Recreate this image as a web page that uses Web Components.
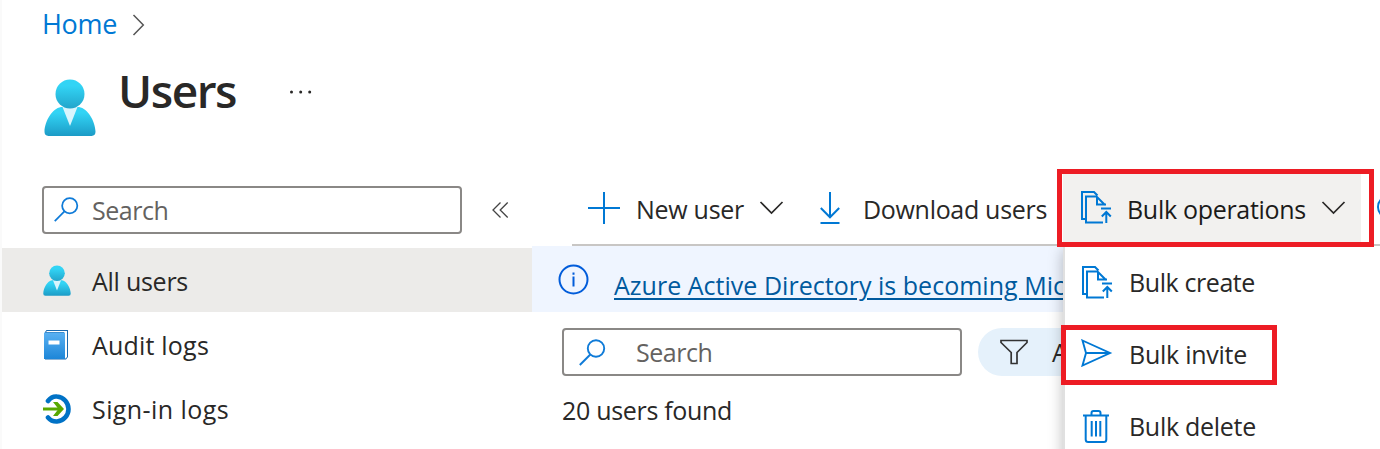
<!DOCTYPE html>
<html lang="en"><head><meta charset="utf-8"><title>Users</title>
<style>html,body{margin:0;height:449px;overflow:hidden;background:#fff}body{font-family:"Open Sans","Noto Sans",sans-serif;color:#292827}</style>
</head><body><users-page></users-page>
<script>
class Base extends HTMLElement{
  constructor(){super();this.attachShadow({mode:'open'});}
  render(css,html){this.shadowRoot.innerHTML='<style>*{box-sizing:border-box}'+css+'</style>'+html;}
}
/* One line of text whose tracking is adjusted to occupy a given advance width. */
customElements.define('ui-label',class extends Base{
  connectedCallback(){
    this.render(':host{display:block;flex:none;white-space:pre;font-size:25px;line-height:36px}span{display:inline-block;text-decoration:var(--line,none);text-decoration-thickness:2px;text-underline-offset:3px}','<span></span>');
    const s=this.shadowRoot.querySelector('span');s.textContent=this.getAttribute('text');
    const w=+this.getAttribute('w');
    if(w){s.style.letterSpacing=((w-s.getBoundingClientRect().width)/s.textContent.length).toFixed(3)+'px';this.style.width=w+'px';}
  }
});
const bulk='<svg width="32" height="33" viewBox="0 0 32 33" fill="none" stroke="#0078d4" stroke-width="2"><path d="M5 28H1V1H13l3.500 3.500M22 31.500H5V5.500H15.500l8.500 8.500M16 6v7.500H25M20 17.500H30M25.300 32V21M20.800 25.500L25.300 21l4.500 4.500"/></svg>';
const lens='<svg width="27" height="27" viewBox="0 0 27 27" fill="none" stroke="#0f7bd8" stroke-width="1.900"><circle cx="17" cy="9.500" r="8.200"/><path d="M11.300 15.500L.800 26"/></svg>';
const chev='<svg width="25" height="14" viewBox="0 0 25 14" fill="none" stroke="#292827" stroke-width="1.700"><path d="M1.500 1L12.500 12 23.500 1"/></svg>';
const user='<svg width="52" height="57" viewBox="0 0 52 57"><defs><linearGradient id="a" x2="0" y2="1"><stop offset=".22" stop-color="#32d4f5"/><stop offset="1" stop-color="#22a5cb"/></linearGradient><linearGradient id="b" x2="0" y2="1"><stop offset=".2" stop-color="#32d4f5"/><stop offset="1" stop-color="#1c9bc6"/></linearGradient></defs><path fill="url(#b)" d="M4.500 57Q.300 56.500.500 52.500C1 42 8 29.500 17 28h18c9 1.500 16 14 16.500 24.500q.2 4-4 4.500z"/><path fill="#d9f5fd" d="M18.500 28h15L26 47z"/><circle cx="26" cy="15" r="14.500" fill="url(#a)"/></svg>';
const icons={bulk,lens,chev,user,
 smalllens:lens.replace('width="27" height="27"','width="25" height="25"'),
 smalluser:user.replace('width="52" height="57"','width="28" height="31"'),
 crumb:'<svg width="13" height="22" viewBox="0 0 13 22" fill="none" stroke="#555" stroke-width="1.500"><path d="M1.500 1L11.300 11 1.500 21"/></svg>',
 dots:'<svg width="24" height="4" viewBox="0 0 24 4" fill="#292827"><circle cx="2.500" cy="2" r="1.500"/><circle cx="11.700" cy="2" r="1.500"/><circle cx="20.700" cy="2" r="1.500"/></svg>',
 collapse:'<svg width="17" height="16" viewBox="0 0 17 16" fill="none" stroke="#444" stroke-width="1.300"><path d="M8.500.500L1 8l7.500 7.500M15.700.500L8.200 8l7.500 7.500"/></svg>',
 book:'<svg width="24" height="30" viewBox="0 0 24 30"><defs><linearGradient id="g" x2="0" y2="1"><stop stop-color="#5ab1f2"/><stop offset="1" stop-color="#1d86d8"/></linearGradient></defs><path fill="#1b69ad" d="M2.500 0H24v27l-2 2.500H1V2z"/><path fill="#fff" d="M2 2l1-1h20v26l-1.500 1.500H20V2z"/><path fill="url(#g)" d="M0 2.500h21V29H0z"/><path fill="#fff" d="M4.500 10.500h11v4h-11z"/></svg>',
 signin:'<svg width="28" height="30" viewBox="0 0 28 30" fill="none"><path d="M5 7C8 3 11.500 2.200 14 2.500 21 3 25.500 9 25.500 15S21 27 14 27.500C10.500 27.700 7.500 26.500 5 23.500" stroke="#0072c6" stroke-width="4.600" stroke-linecap="round"/><path d="M0 15H18" stroke="#59a800" stroke-width="3"/><path d="M10 8h4.500L21 15l-6.500 7H10l5.500-7z" fill="#59a800"/></svg>',
 plus:'<svg width="32" height="32" viewBox="0 0 32 32" stroke="#0078d4" stroke-width="2"><path d="M16 0V32M0 16H32"/></svg>',
 down:'<svg width="20" height="32" viewBox="0 0 20 32" fill="none" stroke="#0078d4" stroke-width="2"><path d="M10 0V25M.800 16L10 25.300 19.200 16M.500 31H19.500"/></svg>',
 info:'<svg width="31" height="31" viewBox="0 0 31 31" fill="none" stroke="#015cda" stroke-width="2"><circle cx="15.500" cy="15.500" r="14"/><path d="M15.500 12.500V22.500M15.500 8.500V10.700"/></svg>',
 funnel:'<svg width="28" height="26" viewBox="0 0 28 26" fill="none" stroke="#333" stroke-width="1.700"><path d="M1 1.500H27V3.500L17 13.500V24.500H11.200V13.500L1 3.500z"/></svg>',
 send:'<svg width="32" height="28" viewBox="0 0 32 28" fill="none" stroke="#0078d4" stroke-width="1.900"><path d="M1.500 1.500L29 14 1.500 26.500 5 14zM5 14H29"/></svg>',
 trash:'<svg width="26" height="33" viewBox="0 0 26 33" fill="none" stroke="#0078d4" stroke-width="2"><path d="M0 5.500H26M8.500 5V3q0-2 2-2h5q2 0 2 2V5M2.700 6V29.500q0 2.500 2.500 2.500h15.600q2.500 0 2.500-2.500V6M8.700 11V26.500M13 11V26.500M17.300 11V26.500"/></svg>'};
customElements.define('ui-icon',class extends Base{connectedCallback(){this.render(':host{display:block;flex:none}svg{display:block}',icons[this.getAttribute('name')]);}});
customElements.define('search-box',class extends Base{connectedCallback(){
  this.render(':host{display:flex;align-items:center;flex:none;height:48px;border:2px solid #8a8886;border-radius:4px;background:#fff;color:#646260}ui-icon{margin-left:var(--icon-x);margin-top:var(--icon-y,0)}ui-label{margin-left:var(--gap);margin-top:var(--text-y,0)}',`<ui-icon name="${this.getAttribute('icon')}"></ui-icon><ui-label text="Search" w="76.500"></ui-label>`);}});
customElements.define('nav-item',class extends Base{connectedCallback(){
  this.render(':host{display:flex;align-items:center;height:64px;padding-left:40px}:host([selected]){background:#ecebe9}.i{width:50px;padding:1px 0 0 1px}ui-label{margin-top:2px}',
  `<div class="i"><slot></slot></div><ui-label text="${this.getAttribute('text')}" w="${this.getAttribute('w')}"></ui-label>`);}});
customElements.define('page-header',class extends Base{connectedCallback(){
  this.render(`:host{display:block;height:186px;padding-left:42px}.c{display:flex;align-items:center;height:48px;color:#0078d4}.c ui-label{font-size:27px}.c ui-icon{margin-left:15px;margin-top:2px}
  .t{display:flex;align-items:flex-start}.t>ui-icon:first-child{margin:31px 0 0 2px}.t ui-label{font-size:46px;font-weight:600;line-height:60px;margin:12px 0 0 22px}.t ui-icon:last-child{margin:42px 0 0 53px}`,
  '<div class="c"><ui-label text="Home" w="75"></ui-label><ui-icon name="crumb"></ui-icon></div><div class="t"><ui-icon name="user"></ui-icon><ui-label text="Users" w="118"></ui-label><ui-icon name="dots"></ui-icon></div>');}});
customElements.define('side-nav',class extends Base{connectedCallback(){
  this.render(`:host{display:block;width:530px}.s{display:flex;align-items:center;height:48px;margin:0 0 14px 40px}search-box{width:420px;--icon-x:10px;--gap:13px;--icon-y:-1px;--text-y:-1px}.s>ui-icon{margin-left:30px}.b{margin-left:1px}`,
  `<div class="s"><search-box icon="smalllens"></search-box><ui-icon name="collapse"></ui-icon></div>
  <nav-item selected text="All users" w="96"><ui-icon name="smalluser"></ui-icon></nav-item>
  <nav-item text="Audit logs" w="117"><ui-icon class="b" name="book"></ui-icon></nav-item>
  <nav-item text="Sign-in logs" w="137"><ui-icon name="signin"></ui-icon></nav-item>`);}});
customElements.define('command-bar',class extends Base{connectedCallback(){
  this.render(`:host{display:flex;align-items:center;margin-left:40px;height:77px;border-bottom:2px solid #c8c6c4;padding-left:16px;overflow:hidden}
  ui-icon{margin-top:2px}ui-label{margin-top:4px}.x{flex:none;height:75px;display:flex;align-items:center;background:#f2f1ef;margin-left:16px;width:298px;padding-left:18px;color:#1b1a19}.more{flex:none;width:24px;height:24px;border:2px solid #0078d4;border-radius:50%;margin-left:16px}`,
  `<ui-icon name="plus"></ui-icon><ui-label style="margin-left:16px" text="New user" w="108"></ui-label><ui-icon style="margin-left:15px" name="chev"></ui-icon>
  <ui-icon style="margin-left:36px" name="down"></ui-icon><ui-label style="margin-left:23px" text="Download users" w="184"></ui-label>
  <div class="x"><ui-icon name="bulk"></ui-icon><ui-label style="margin-left:14px" text="Bulk operations" w="179"></ui-label><ui-icon style="margin-left:15px" name="chev"></ui-icon></div><div class="more"></div>`);}});
customElements.define('info-banner',class extends Base{connectedCallback(){
  this.render(':host{display:flex;height:66px;background:#eff5ff;padding-left:26px;overflow:hidden}ui-icon{margin-top:18px}ui-label{margin:21px 0 0 25px;color:#005a9e;--line:underline}','<ui-icon name="info"></ui-icon><ui-label text="Azure Active Directory is becoming Mic" w="451"></ui-label>');}});
customElements.define('user-list',class extends Base{connectedCallback(){
  this.render(`:host{display:block;padding:16px 0 0 30px}.r{display:flex}search-box{width:400px;--icon-x:15px;--gap:30px}.p{display:flex;align-items:center;height:48px;width:200px;border-radius:24px;background:#e5f1fb;margin-left:16px;padding-left:22px}.p ui-label{margin:0 0 0 24px}.n{margin-top:16px}`,
  `<div class="r"><search-box icon="lens"></search-box><div class="p"><ui-icon name="funnel"></ui-icon><ui-label text="A"></ui-label></div></div><ui-label class="n" text="20 users found" w="170"></ui-label>`);}});
customElements.define('menu-item',class extends Base{connectedCallback(){
  this.render(':host{display:flex;align-items:center;height:72px;padding-left:17px}.i{width:47px}ui-label{margin-top:-1px}',`<div class="i"><slot></slot></div><ui-label text="${this.getAttribute('text')}" w="${this.getAttribute('w')}"></ui-label>`);}});
customElements.define('bulk-menu',class extends Base{connectedCallback(){
  this.render(':host{display:block;background:#fff;border-left:2px solid #e0e0e0;box-shadow:0 4px 14px #0004}',
  `<menu-item text="Bulk create" w="126"><ui-icon name="bulk"></ui-icon></menu-item><menu-item text="Bulk invite" w="118"><ui-icon name="send" style="margin:-2px 0 0 -1px"></ui-icon></menu-item><menu-item text="Bulk delete" w="127"><ui-icon name="trash" style="margin-left:1px"></ui-icon></menu-item>`);}});
customElements.define('highlight-box',class extends Base{connectedCallback(){this.render(':host{display:block;box-sizing:border-box;border:5px solid #ed1c24}','');}});
customElements.define('users-page',class extends Base{connectedCallback(){
  this.render(`:host{display:block;position:relative;width:1380px;height:449px;overflow:hidden;border-left:2px solid #fafafa;box-sizing:border-box}page-header{margin-left:-2px}
  .g{display:grid;grid-template-columns:530px 848px}.m{margin-top:-17px;min-width:0}.clip{position:absolute;left:1043px;top:246px;width:335px;height:203px;overflow:hidden}
  bulk-menu{margin-left:18px;width:340px}highlight-box{position:absolute}.h1{left:1055px;top:169px;width:317px;height:78px}.h2{left:1059px;top:325px;width:216px;height:60px}`,
  `<page-header></page-header><div class="g"><side-nav></side-nav><div class="m"><command-bar></command-bar><info-banner></info-banner><user-list></user-list></div></div>
  <div class="clip"><bulk-menu></bulk-menu></div><highlight-box class="h1"></highlight-box><highlight-box class="h2"></highlight-box>`);}});
</script></body></html>
